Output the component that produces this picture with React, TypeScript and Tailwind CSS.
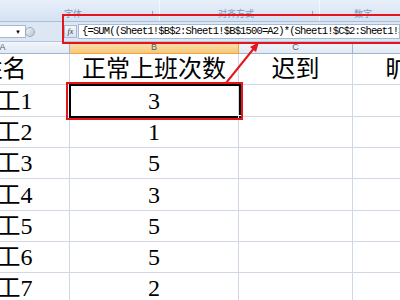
const rows = [
  { name: "员工1", count: "3" },
  { name: "员工2", count: "1" },
  { name: "员工3", count: "5" },
  { name: "员工4", count: "3" },
  { name: "员工5", count: "5" },
  { name: "员工6", count: "5" },
  { name: "员工7", count: "2" },
];

const cellFont = { fontFamily: "'Liberation Serif', 'Noto Sans CJK SC', serif" };

const Ribbon = () => (
  <div className="h-[22px] flex bg-gradient-to-b from-[#e8f0fa] to-[#d5e2f3] border-b border-[#a9bfd9] text-[9px] text-[#7e97bb]" style={{ fontFamily: "'Noto Sans CJK SC', sans-serif" }}>
    <div className="w-[160px] flex items-end pb-[3px] border-r border-[#f4f8fd] relative">
      <span className="ml-[64px] leading-none">字体</span>
      <span className="absolute right-[6px] bottom-[5px] w-[5px] h-[5px] border-r border-b border-[#8aa3c6]" />
    </div>
    <div className="w-[160px] flex items-end pb-[3px] border-r border-[#f4f8fd] relative">
      <span className="ml-[58px] leading-none">对齐方式</span>
      <span className="absolute right-[6px] bottom-[5px] w-[5px] h-[5px] border-r border-b border-[#8aa3c6]" />
    </div>
    <div className="flex-1 flex items-end pb-[3px]">
      <span className="ml-[34px] leading-none">数字</span>
    </div>
  </div>
);

const FormulaBar = () => (
  <div className="h-[20px] flex items-center bg-[#dde7f4] border-b border-[#b3c6de]">
    <div className="w-[26px] h-[13px] bg-white border border-l-0 border-[#a5b9d3] flex items-center justify-end pr-[4px]">
      <span className="text-[6px] text-black leading-none">▼</span>
    </div>
    <div className="w-[10px] h-[10px] rounded-full bg-gradient-to-br from-[#f4f6f9] to-[#b9c3d0] border border-[#9aa8ba] -ml-[1px]" />
    <div className="w-[29px]" />
    <div className="w-[13px] h-[13px] bg-gradient-to-b from-[#f5f8fc] to-[#d9e2ee] border border-[#a5b9d3] flex items-center justify-center">
      <span className="text-[8px] italic leading-none text-[#333]" style={{ fontFamily: "'Liberation Serif', serif" }}>fx</span>
    </div>
    <div className="flex-1 h-[15px] bg-white border border-[#a5b9d3] ml-[1px] flex items-center pl-[3px] overflow-hidden whitespace-nowrap">
      <span className="text-[10.5px] tracking-[-0.85px] text-black leading-none" style={{ fontFamily: "'Liberation Mono', monospace" }}>
        {"{=SUM((Sheet1!$B$2:Sheet1!$B$1500=A2)*(Sheet1!$C$2:Sheet1!$C$1500=1))}"}
      </span>
    </div>
  </div>
);

const Cell = ({ w, children, className = "" }: { w: string; children?: React.ReactNode; className?: string }) => (
  <div className={`${w} shrink-0 h-full flex items-center justify-center border-r border-b border-[#d0d7e5] text-[24px] text-black whitespace-nowrap overflow-hidden ${className}`} style={cellFont}>
    {children}
  </div>
);

const App = () => {
  return (
    <div className="w-[400px] h-[300px] overflow-hidden bg-white relative">
      <Ribbon />
      <FormulaBar />
      <div className="-ml-[64px]">
        <div className="h-[12px] flex text-[9px] leading-none text-[#4c5f7a]" style={{ fontFamily: "'Liberation Sans', sans-serif" }}>
          <div className="w-[134px] shrink-0 flex items-center justify-center bg-gradient-to-b from-[#f3f6fb] to-[#e1e9f4] border-r border-b border-[#9eb6ce]">A</div>
          <div className="w-[169px] shrink-0 flex items-center justify-center bg-gradient-to-b from-[#fbe3b4] to-[#f6c877] border-r border-b border-[#f2a243]">B</div>
          <div className="w-[114px] shrink-0 flex items-center justify-center bg-gradient-to-b from-[#f3f6fb] to-[#e1e9f4] border-r border-b border-[#9eb6ce]">C</div>
          <div className="w-[114px] shrink-0 flex items-center justify-center bg-gradient-to-b from-[#f3f6fb] to-[#e1e9f4] border-r border-b border-[#9eb6ce]">D</div>
        </div>
        <div className="h-[31px] flex">
          <Cell w="w-[134px]">姓名</Cell>
          <Cell w="w-[169px]">正常上班次数</Cell>
          <Cell w="w-[114px]">迟到</Cell>
          <Cell w="w-[114px]">旷工</Cell>
        </div>
        {rows.map((r, i) => (
          <div key={r.name} className={`${i === 0 || i === 3 ? "h-[32px]" : "h-[31px]"} flex`}>
            <Cell w="w-[134px]">{r.name}</Cell>
            <Cell w="w-[169px]">{r.count}</Cell>
            <Cell w="w-[114px]" />
            <Cell w="w-[114px]" />
          </div>
        ))}
      </div>

      {/* selection on B2 */}
      <div className="absolute left-[69px] top-[84px] w-[172px] h-[34px] border-2 border-black" />
      <div className="absolute left-[238px] top-[115px] w-[5px] h-[5px] bg-black border border-white" />

      {/* red annotations */}
      <div className="absolute left-[66px] top-[82px] w-[177px] h-[38px] border-2 border-[#e8141c]" />
      <div className="absolute left-[62px] top-[14px] w-[350px] h-[30px] border-2 border-[#e8141c]" />
      <svg className="absolute left-0 top-0" width="400" height="300" viewBox="0 0 400 300">
        <line x1="226" y1="83" x2="255" y2="47" stroke="#e8141c" strokeWidth="2" />
        <polygon points="259,42 250,47 256,52" fill="#e8141c" />
      </svg>
    </div>
  );
};

export default App;
